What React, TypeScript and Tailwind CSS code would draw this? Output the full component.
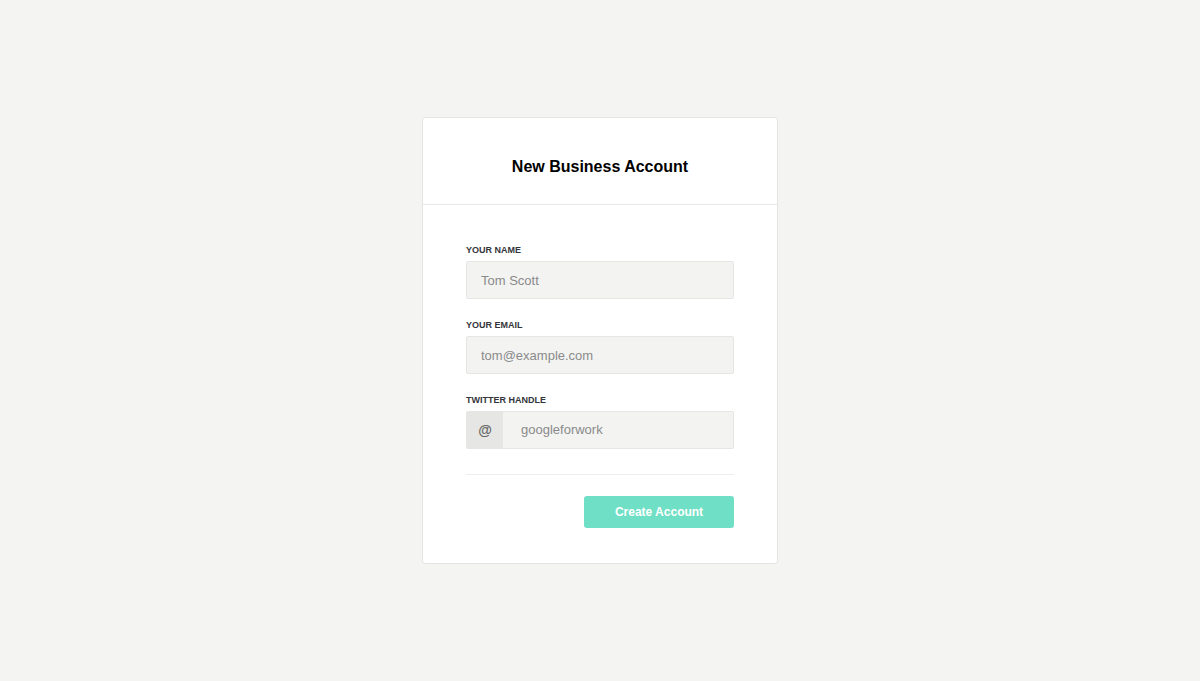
export default function App() {
  return (
    <div
      className="flex h-screen w-full items-center justify-center bg-[#f4f4f2]"
      style={{ fontFamily: '"Liberation Sans", Arial, sans-serif' }}
    >
      <div className="w-[356px] rounded-[3px] border border-[#e4e4e2] bg-white">
        <div className="flex h-[87px] justify-center border-b border-[#e8e8e6] pt-[39px]">
          <h1 className="text-[16px] font-bold leading-[20px] text-black">New Business Account</h1>
        </div>

        <form className="px-[43px] pb-[35px] pt-[40px]" onSubmit={(e) => e.preventDefault()}>
          <div className="flex flex-col gap-[21px]">
            <div>
              <label className="mb-[4px] block h-[12px] text-[9px] font-bold uppercase leading-[11px] text-[#33343a]">
                Your Name
              </label>
              <input
                className="h-[38px] w-full rounded-[2px] border border-[#e6e6e4] bg-[#f3f3f2] px-[14px] text-[13px] text-[#555] outline-none placeholder:text-[#8a8a8a]"
                placeholder="Tom Scott"
              />
            </div>

            <div>
              <label className="mb-[5px] block h-[11px] text-[9px] font-bold uppercase leading-[10px] text-[#33343a]">
                Your Email
              </label>
              <input
                className="h-[38px] w-full rounded-[2px] border border-[#e6e6e4] bg-[#f3f3f2] px-[14px] text-[13px] text-[#555] outline-none placeholder:text-[#8a8a8a]"
                placeholder="tom@example.com"
              />
            </div>

            <div>
              <label className="mb-[5px] block h-[11px] text-[9px] font-bold uppercase leading-[10px] text-[#33343a]">
                Twitter Handle
              </label>
              <div className="flex h-[38px] w-full overflow-hidden rounded-[2px] border border-[#e6e6e4] bg-[#f3f3f2]">
                <span className="flex w-[36px] items-center justify-center bg-[#e6e6e5] text-[14px] font-bold text-[#666]">
                  @
                </span>
                <input
                  className="min-w-0 flex-1 bg-transparent px-[18px] text-[13px] text-[#555] outline-none placeholder:text-[#8a8a8a]"
                  placeholder="googleforwork"
                />
              </div>
            </div>
          </div>

          <div className="mt-[25px] border-t border-[#eeeeec]" />

          <div className="mt-[21px] flex justify-end">
            <button
              type="submit"
              className="h-[32px] w-[150px] rounded-[3px] bg-[#6fdfc5] text-[12px] font-bold text-white"
            >
              Create Account
            </button>
          </div>
        </form>
      </div>
    </div>
  );
}
